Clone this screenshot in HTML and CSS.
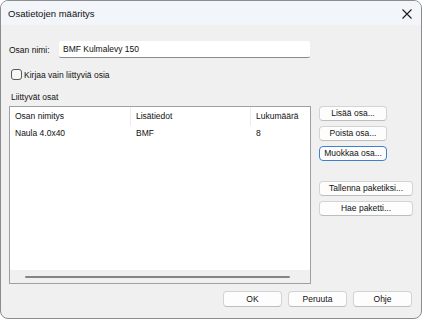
FILE: index.html
```html
<!DOCTYPE html>
<html lang="fi">
<head>
    <meta charset="UTF-8">
    <meta name="viewport" content="width=device-width, initial-scale=1.0">
    <title>Osatietojen määritys</title>
    <link rel="stylesheet" href="styles.css">
</head>
<body>

    <div class="window">
        <!-- Title bar -->
        <div class="titlebar">
            <span class="title">Osatietojen määritys</span>
            <svg class="close" width="10" height="10" viewBox="0 0 10 10">
                <path d="M0.5 0.5 L9.5 9.5 M9.5 0.5 L0.5 9.5" stroke="#1a1a1a" stroke-width="1.1" fill="none"/>
            </svg>
        </div>

        <div class="content">
            <!-- Name row -->
            <div class="name-row">
                <label class="name-label">Osan nimi:</label>
                <input class="name-input" type="text" value="BMF Kulmalevy 150">
            </div>

            <label class="check-row">
                <span class="checkbox"></span>
                <span>Kirjaa vain liittyviä osia</span>
            </label>

            <div class="group-label">Liittyvät osat</div>

            <div class="main">
                <!-- Parts list -->
                <div class="list">
                    <div class="list-head">
                        <div class="col col-name">Osan nimitys</div>
                        <div class="col col-info">Lisätiedot</div>
                        <div class="col col-count">Lukumäärä</div>
                    </div>
                    <div class="list-row">
                        <div class="col col-name">Naula 4.0x40</div>
                        <div class="col col-info">BMF</div>
                        <div class="col col-count">8</div>
                    </div>
                    <div class="list-fill"></div>
                    <div class="hscroll"><div class="thumb"></div></div>
                </div>

                <!-- Side buttons -->
                <div class="side">
                    <button class="btn">Lisää osa...</button>
                    <button class="btn">Poista osa...</button>
                    <button class="btn focused">Muokkaa osa...</button>
                    <button class="btn wide gap">Tallenna paketiksi...</button>
                    <button class="btn wide">Hae paketti...</button>
                </div>
            </div>

            <div class="footer">
                <button class="btn footer-btn">OK</button>
                <button class="btn footer-btn">Peruuta</button>
                <button class="btn footer-btn">Ohje</button>
            </div>
        </div>
    </div>

</body>
</html>
```

FILE: styles.css
```css
* {
    box-sizing: border-box;
}
body {
    margin: 0;
    font-family: "Liberation Sans", Arial, sans-serif;
    font-size: 8.5px;
    color: #111111;
    background: #ffffff;
    white-space: nowrap;
}
.window {
    width: 422px;
    height: 319px;
    border: 1px solid #8c8c8c;
    border-radius: 8px;
    background: #f0f0f0;
    overflow: hidden;
    display: flex;
    flex-direction: column;
}
.titlebar {
    height: 24px;
    background: #f2f6fa;
    display: flex;
    align-items: center;
    justify-content: space-between;
    padding: 1px 9px 0 7px;
}
.title {
    font-size: 9.5px;
}
.content {
    flex: 1;
    padding: 0 8px 0 8px;
    display: flex;
    flex-direction: column;
}
.name-row {
    display: flex;
    align-items: center;
    margin-top: 16px;
    height: 17px;
}
.name-label {
    width: 50px;
    flex-shrink: 0;
}
.name-input {
    width: 251px;
    height: 17px;
    border: none;
    border-bottom: 1px solid #8a8a8a;
    border-radius: 2px;
    background: #ffffff;
    font-family: inherit;
    font-size: 8.5px;
    padding: 0 0 0 4px;
    color: #111111;
    outline: none;
}
.check-row {
    display: flex;
    align-items: center;
    margin-top: 10px;
    margin-left: 2px;
    height: 13px;
}
.checkbox {
    width: 11px;
    height: 11px;
    border: 1px solid #5a5a5a;
    border-radius: 3px;
    background: #f7f7f7;
    margin-right: 2px;
}
.group-label {
    margin-top: 9px;
    margin-left: 2px;
    height: 14px;
    line-height: 14px;
}
.main {
    display: flex;
    margin-top: 2px;
}
.list {
    width: 302px;
    height: 178px;
    border: 1px solid #a0a0a0;
    background: #ffffff;
    display: flex;
    flex-direction: column;
}
.list-head, .list-row {
    display: flex;
}
.list-head {
    height: 19px;
    align-items: center;
}
.list-head .col {
    border-right: 1px solid #ececec;
    height: 19px;
    line-height: 19px;
}
.list-head .col-count {
    border-right: none;
}
.list-row {
    height: 14px;
    line-height: 14px;
}
.col {
    padding-left: 5px;
    overflow: hidden;
}
.col-name {
    width: 121px;
}
.col-info {
    width: 120px;
}
.col-count {
    flex: 1;
}
.list-fill {
    flex: 1;
}
.hscroll {
    height: 13px;
    background: #f0f0f0;
    display: flex;
    align-items: center;
    padding: 0 20px 0 15px;
}
.thumb {
    flex: 1;
    height: 2px;
    border-radius: 1px;
    background: #858585;
}
.side {
    display: flex;
    flex-direction: column;
    align-items: flex-start;
    margin-left: 8px;
    gap: 5px;
}
.btn {
    width: 68px;
    height: 15px;
    padding: 0;
    border: 1px solid #d3d3d3;
    border-bottom-color: #bdbdbd;
    border-radius: 4px;
    background: #fdfdfd;
    font-family: inherit;
    font-size: 8.5px;
    line-height: 13px;
    color: #111111;
    white-space: nowrap;
}
.btn.focused {
    border: 1px solid #3d80cf;
}
.btn.wide {
    width: 94px;
}
.btn.gap {
    margin-top: 15px;
}
.footer {
    display: flex;
    justify-content: flex-end;
    gap: 6px;
    margin-top: 7px;
    padding-right: 1px;
}
.footer-btn {
    width: 59px;
    height: 16px;
}
```
